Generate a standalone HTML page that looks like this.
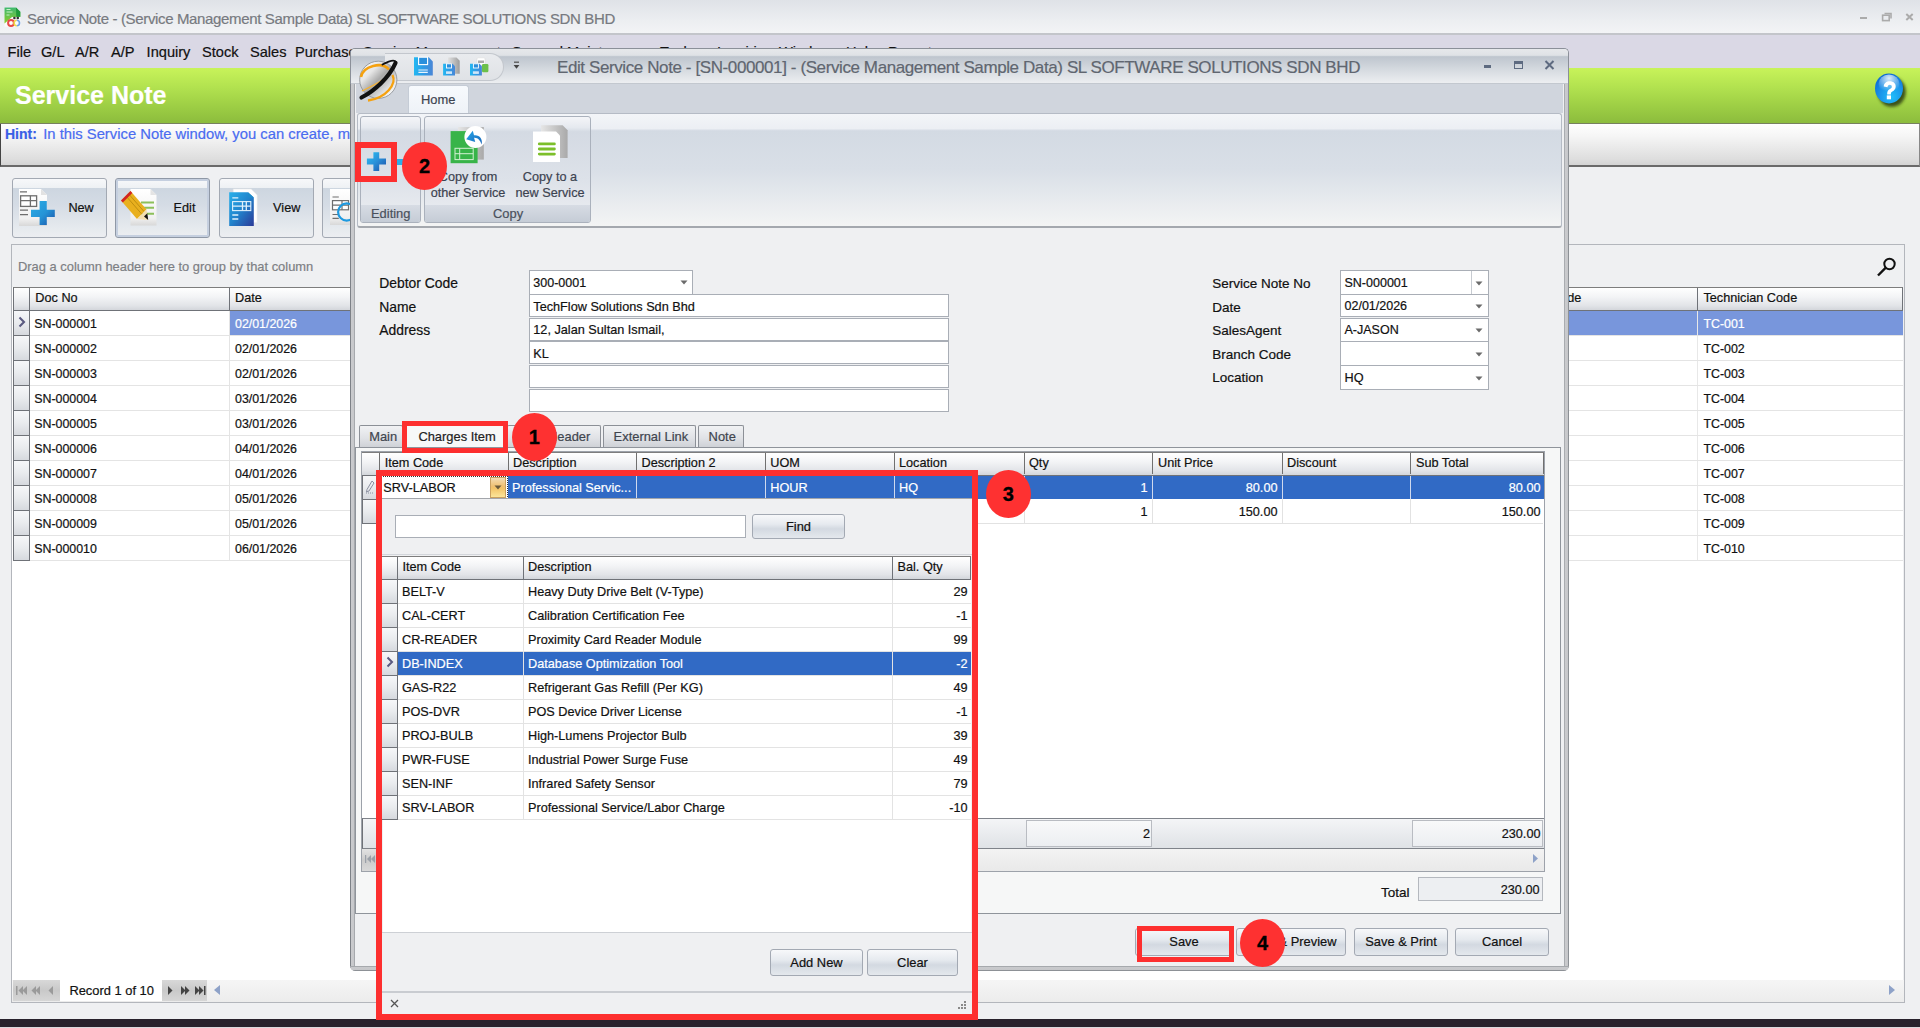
<!DOCTYPE html>
<html><head><meta charset="utf-8">
<style>
*{box-sizing:border-box;margin:0;padding:0}
html,body{width:1920px;height:1028px;overflow:hidden}
body{position:relative;background:#eff0f2;font-family:"Liberation Sans",sans-serif;font-size:12.7px;color:#111}
.a{position:absolute}
svg{display:block}
.t{position:absolute;white-space:pre;line-height:1;-webkit-text-stroke:0.2px currentColor}
.btn{position:absolute;border:1px solid #a3a9b3;border-radius:3px;background:linear-gradient(#f7f8fa,#e4e8ee 20%,#d5dbe3 55%,#e8ebef)}
.hd{position:absolute;background:linear-gradient(#ffffff,#f3f4f6 40%,#e2e4e8 80%,#d3d6db);border-top:1px solid #7d7d7d;border-bottom:1px solid #6f7278}
.ind{position:absolute;background:linear-gradient(#f6f7f9,#e9ebee 50%,#d6d9de);border:1px solid #6f7278;border-top:none}
.red{position:absolute;border:5px solid #fd2f2f}
.circ{position:absolute;width:46px;height:46px;border-radius:50%;background:#fe3131}
</style></head><body>
<div class="a" style="left:0px;top:0px;width:1920px;height:34px;background:linear-gradient(#dfe2e7,#eceef1 60%,#f3f4f6)"></div>
<div class="a" style="left:0px;top:33px;width:1920px;height:2px;background:#c3c5ca"></div>
<div class="a" style="left:4px;top:7px;width:18px;height:21px"><svg width="18" height="21" viewBox="0 0 18 21">
<defs><linearGradient id="ag" x1="0" y1="0" x2="0" y2="1"><stop offset="0" stop-color="#3fb870"/><stop offset="1" stop-color="#8ccc2a"/></linearGradient></defs>
<path d="M0.5 0.5h11.5l4.3 4.3v15H0.5z" fill="#fafafa"/>
<path d="M0.5 0.5h11.5l4.3 4.3v5.2H8L0.5 16.5z" fill="url(#ag)"/>
<path d="M12 0.5l4.3 4.3v5h-4z" fill="#1f9a3a"/>
<path d="M2.5 2.5h4M2.5 5h6M2.5 8h3" stroke="#c7efc7" stroke-width="1"/>
<circle cx="10.4" cy="11" r="1.3" fill="#333"/><circle cx="13.8" cy="11" r="1.3" fill="#333"/>
<circle cx="7" cy="16" r="2.9" fill="#fff" stroke="#e84848" stroke-width="2"/>
<path d="M12.8 13.3a2.7 2.7 0 0 0 0 5.4" fill="none" stroke="#f0d84a" stroke-width="1.6"/>
<path d="M12.8 13.3a2.7 2.7 0 0 1 0 5.4" fill="none" stroke="#6ea2e8" stroke-width="1.6"/>
</svg></div>
<div class="t" style="left:27px;top:11px;font-size:15px;color:#777a80;letter-spacing:-0.35px;">Service Note - (Service Management Sample Data) SL SOFTWARE SOLUTIONS SDN BHD</div>
<div class="a" style="left:1860px;top:17px;width:7px;height:2px;background:#ababab"></div>
<div class="a" style="left:1880px;top:12px"><svg width="14" height="10"><path d="M4.5 1.5h6.5v5" fill="none" stroke="#ababab" stroke-width="1.6"/><rect x="2.6" y="3.2" width="6.6" height="5.4" fill="none" stroke="#ababab" stroke-width="1.6"/></svg></div>
<div class="a" style="left:1905px;top:13px"><svg width="9" height="8"><path d="M1.3 1l6.4 6M7.7 1l-6.4 6" stroke="#ababab" stroke-width="2"/></svg></div>
<div class="a" style="left:0px;top:35px;width:1920px;height:33px;background:#dad8e5"></div>
<div class="t" style="left:7.6px;top:45px;font-size:14.6px;color:#111;">File</div>
<div class="t" style="left:41px;top:45px;font-size:14.6px;color:#111;">G/L</div>
<div class="t" style="left:75px;top:45px;font-size:14.6px;color:#111;">A/R</div>
<div class="t" style="left:111px;top:45px;font-size:14.6px;color:#111;">A/P</div>
<div class="t" style="left:146.6px;top:45px;font-size:14.6px;color:#111;">Inquiry</div>
<div class="t" style="left:202px;top:45px;font-size:14.6px;color:#111;">Stock</div>
<div class="t" style="left:250px;top:45px;font-size:14.6px;color:#111;">Sales</div>
<div class="t" style="left:295px;top:45px;font-size:14.6px;color:#111;">Purchase</div>
<div class="a" style="left:350px;top:35px;width:620px;height:14px;overflow:hidden"><div class="t" style="left:13px;top:10.1px;font-size:14.6px;color:#111">Service Management</div><div class="t" style="left:161px;top:10.1px;font-size:14.6px;color:#111">General Maintenance</div><div class="t" style="left:310px;top:10.1px;font-size:14.6px;color:#111">Tools</div><div class="t" style="left:367px;top:10.1px;font-size:14.6px;color:#111">Inquiries</div><div class="t" style="left:429px;top:10.1px;font-size:14.6px;color:#111">Window</div><div class="t" style="left:496px;top:10.1px;font-size:14.6px;color:#111">Help</div><div class="t" style="left:538px;top:10.1px;font-size:14.6px;color:#111">Reports</div></div>
<div class="a" style="left:0px;top:68px;width:1920px;height:55px;background:linear-gradient(#c8f35a,#b2e24f 35%,#9acb43 75%,#8cbc3d)"></div>
<div class="t" style="left:15px;top:83px;font-size:25px;color:#fff;font-weight:bold;">Service Note</div>
<div class="a" style="left:1870px;top:68px;width:40px;height:44px"><svg width="40" height="44" viewBox="0 0 40 44">
<defs><radialGradient id="hg" cx=".6" cy=".78" r=".85"><stop offset="0" stop-color="#22bdfa"/><stop offset=".55" stop-color="#1890e8"/><stop offset="1" stop-color="#0b62d0"/></radialGradient>
<radialGradient id="hh" cx=".5" cy=".2" r=".7"><stop offset="0" stop-color="#fff" stop-opacity=".85"/><stop offset="1" stop-color="#fff" stop-opacity="0"/></radialGradient>
<filter id="hb" x="-30%" y="-30%" width="160%" height="160%"><feGaussianBlur stdDeviation="1.6"/></filter></defs>
<ellipse cx="21.8" cy="23.8" rx="14" ry="15" fill="#24300c" opacity=".8" filter="url(#hb)"/>
<ellipse cx="19" cy="20.4" rx="14" ry="15" fill="url(#hg)"/>
<ellipse cx="19" cy="16" rx="10.5" ry="9.5" fill="url(#hh)"/>
<path d="M13.8 18.6C13.8 15.2 16.3 13.3 19.8 13.3 23.4 13.3 25.7 15.5 25.7 18.4 25.7 21 24.1 22.4 22.4 23.4 21.2 24.1 20.9 24.7 20.9 26V26.6H17.2V25.4C17.2 23.2 18.1 22 19.9 21 21.2 20.2 21.8 19.7 21.8 18.7 21.8 17.5 21 16.8 19.8 16.8 18.4 16.8 17.6 17.7 17.6 19.2z" fill="#fff"/>
<rect x="16.8" y="27.4" width="4.2" height="3.9" fill="#fff"/>
</svg></div>
<div class="a" style="left:0px;top:123px;width:1920px;height:44px;background:linear-gradient(#ffffff,#f6f6f6 30%,#dedede 85%,#d4d4d4);border-left:1px solid #444;border-right:1px solid #888;border-bottom:2px solid #6a6a6a"></div>
<div class="a" style="left:0px;top:122.5px;width:1920px;height:1px;background:#77805f"></div>
<div class="t" style="left:5px;top:127px;font-size:14px;color:#3a5fe6;font-weight:bold;">Hint:</div>
<div class="t" style="left:43.2px;top:127px;font-size:14.8px;color:#4a6cf0;">In this Service Note window, you can create, modify and delete</div>
<div class="btn" style="left:11.5px;top:177.5px;width:95.0px;height:60px;border-radius:3px;background:linear-gradient(#f7f8fa,#eef1f4 15%,#cdd6e0 16%,#d5dce5 45%,#e6eaee 85%,#eceef1)"></div>
<div class="a" style="left:12px;top:180px;width:60px;height:55px"><svg width="60" height="55" viewBox="0 0 60 55">
<defs><linearGradient id="dg" x1="0" y1="0" x2="0" y2="1"><stop offset="0" stop-color="#ffffff"/><stop offset=".8" stop-color="#f0f0f0"/><stop offset="1" stop-color="#d8d8d8"/></linearGradient>
<linearGradient id="pg" x1="0" y1="0" x2="1" y2="1"><stop offset="0" stop-color="#2aaee6"/><stop offset=".55" stop-color="#2593d6"/><stop offset="1" stop-color="#1a4fa6"/></linearGradient></defs>
<path d="M7 9h22l6 6v31H7z" fill="url(#dg)"/><path d="M29 9l6 6h-6z" fill="#e2e2e2"/>
<rect x="8.6" y="15.8" width="16" height="10.6" fill="#fff" stroke="#6e6e6e" stroke-width="1.3"/>
<path d="M8.6 20.6h16M18.4 15.8v10.6M8 11.8h7M8 30.2h8M8 34.6h8" stroke="#6e6e6e" stroke-width="1.3"/>
<path d="M27.6 21h7.2v8.7h8v7.2h-8V45h-7.2v-8.1H19v-7.2h8.6z" fill="url(#pg)"/>
</svg></div>
<div class="t" style="left:68.4px;top:202px;font-size:12.7px;color:#111;">New</div>
<div class="btn" style="left:114.5px;top:177.5px;width:95.0px;height:60px;border-radius:3px;box-shadow:inset 0 0 0 2px #c5cfdf;border-color:#8f98a6;background:linear-gradient(#f7f8fa,#eef1f4 15%,#cdd6e0 16%,#d5dce5 45%,#e6eaee 85%,#eceef1)"></div>
<div class="a" style="left:115px;top:180px;width:60px;height:55px"><svg width="60" height="55" viewBox="0 0 60 55">
<path d="M15.5 9h20l6 6v30.5h-26z" fill="url(#dg)"/><path d="M35.5 9l6 6h-6z" fill="#e4e4e4"/>
<path d="M26 22.5h13M26 27.8h13M21 33.7h18" stroke="#8cc05a" stroke-width="2"/>
<path d="M6 20.5l9.5-9.5 16 18.5-9.5 9.5z" fill="#e9b01e"/>
<path d="M11 16l15.5 17.8M13.4 13.6l15.5 17.8" stroke="#b98a10" stroke-width="0.9"/>
<path d="M6 20.5l9.5-9.5 1.8 2-9.5 9.5z" fill="#d22424"/>
<path d="M22 39l9.5-9.5 1.5 10.5z" fill="#f3deb0"/><path d="M29 36.5l3.3-3.2.9 6.7z" fill="#111"/>
</svg></div>
<div class="t" style="left:173.6px;top:202px;font-size:12.7px;color:#111;">Edit</div>
<div class="btn" style="left:218.5px;top:177.5px;width:95.0px;height:60px;border-radius:3px;background:linear-gradient(#f7f8fa,#eef1f4 15%,#cdd6e0 16%,#d5dce5 45%,#e6eaee 85%,#eceef1)"></div>
<div class="a" style="left:219px;top:180px;width:60px;height:55px"><svg width="60" height="55" viewBox="0 0 60 55">
<defs><linearGradient id="vg" x1="0" y1="0" x2="1" y2="1"><stop offset="0" stop-color="#28b0ea"/><stop offset=".5" stop-color="#2183cc"/><stop offset="1" stop-color="#2b3a98"/></linearGradient></defs>
<path d="M14.2 9h18l6 6v27.8h-24z" fill="#fff" stroke="#e6e6e6" stroke-width=".6"/>
<path d="M10.2 12.2h18.8l5.8 5.3v28.4H10.2z" fill="url(#vg)"/><path d="M29 12.2l5.8 5.3H29z" fill="#1e8ccc"/>
<rect x="13.6" y="21.6" width="18.2" height="9" fill="none" stroke="#dff1fc" stroke-width="1.1"/>
<path d="M13.6 26.1h18.2M23.5 21.6v9M27.3 21.6v9M13.3 17.8h6M13.3 35h6M13.3 39h6" stroke="#dff1fc" stroke-width="1.3"/>
</svg></div>
<div class="t" style="left:273.1px;top:202px;font-size:12.7px;color:#111;">View</div>
<div class="btn" style="left:321.5px;top:177.5px;width:95px;height:60px;background:linear-gradient(#f7f8fa,#eef1f4 15%,#cdd6e0 16%,#d5dce5 45%,#e6eaee 85%,#eceef1)"></div>
<div class="a" style="left:322px;top:180px;width:60px;height:55px"><svg width="60" height="55" viewBox="0 0 60 55"><path d="M8 9h22l6 6v30H8z" fill="url(#dg)"/><rect x="10.5" y="20.6" width="16" height="9.2" fill="#fff" stroke="#6e6e6e" stroke-width="1.2"/><path d="M10.5 25.2h16M20 20.6v9.2M10.5 17h6.3M10.5 34.5h6.3M10.5 38.4h6.3" stroke="#6e6e6e" stroke-width="1.2"/><circle cx="24.7" cy="32" r="8.6" fill="none" stroke="#1e9ae0" stroke-width="2.2"/></svg></div>
<div class="a" style="left:11px;top:244px;width:1894px;height:759px;border:1px solid #b3b6bc;background:#eff0f2"></div>
<div class="t" style="left:18px;top:261px;font-size:12.9px;color:#7d7f84;">Drag a column header here to group by that column</div>
<div class="a" style="left:1876px;top:256px;width:22px;height:22px"><svg width="22" height="22"><circle cx="13.5" cy="8" r="5.2" fill="none" stroke="#111" stroke-width="2"/><path d="M9.8 11.7L2 19.5" stroke="#111" stroke-width="2.4"/></svg></div>
<div class="a" style="left:12px;top:287px;width:1891px;height:693px;background:#fff"></div>
<div class="hd" style="left:13px;top:287px;width:1890px;height:24px;border-left:1px solid #6f7278;border-right:1px solid #6f7278"></div>
<div class="a" style="left:29px;top:288px;width:1px;height:22px;background:#6f7278"></div>
<div class="a" style="left:229px;top:288px;width:1px;height:22px;background:#6f7278"></div>
<div class="a" style="left:1697px;top:288px;width:1px;height:22px;background:#6f7278"></div>
<div class="t" style="left:35.3px;top:292px;font-size:12.7px;color:#111;">Doc No</div>
<div class="t" style="left:235px;top:292px;font-size:12.7px;color:#111;">Date</div>
<div class="t" style="left:1551px;top:292px;font-size:12.7px;color:#111;">Code</div>
<div class="t" style="left:1703.4px;top:292px;font-size:12.7px;color:#111;">Technician Code</div>
<div class="a" style="left:230px;top:311px;width:1673px;height:24px;background:#7896dc"></div>
<div class="a" style="left:30px;top:335px;width:1873px;height:1px;background:#e4e4e4"></div>
<div class="a" style="left:229px;top:311px;width:1px;height:24px;background:#e4e4e4"></div>
<div class="a" style="left:1697px;top:311px;width:1px;height:24px;background:#e8e8e8"></div>
<div class="ind" style="left:13px;top:311px;width:17px;height:25px"></div>
<div class="t" style="left:34.2px;top:318px;font-size:12.4px;color:#111;">SN-000001</div>
<div class="t" style="left:235px;top:318px;font-size:12.4px;color:#fff;">02/01/2026</div>
<div class="t" style="left:1703.4px;top:318px;font-size:12.4px;color:#fff;">TC-001</div>
<div class="a" style="left:30px;top:360px;width:1873px;height:1px;background:#e4e4e4"></div>
<div class="a" style="left:229px;top:336px;width:1px;height:24px;background:#e4e4e4"></div>
<div class="a" style="left:1697px;top:336px;width:1px;height:24px;background:#e8e8e8"></div>
<div class="ind" style="left:13px;top:336px;width:17px;height:25px"></div>
<div class="t" style="left:34.2px;top:343px;font-size:12.4px;color:#111;">SN-000002</div>
<div class="t" style="left:235px;top:343px;font-size:12.4px;color:#111;">02/01/2026</div>
<div class="t" style="left:1703.4px;top:343px;font-size:12.4px;color:#111;">TC-002</div>
<div class="a" style="left:30px;top:385px;width:1873px;height:1px;background:#e4e4e4"></div>
<div class="a" style="left:229px;top:361px;width:1px;height:24px;background:#e4e4e4"></div>
<div class="a" style="left:1697px;top:361px;width:1px;height:24px;background:#e8e8e8"></div>
<div class="ind" style="left:13px;top:361px;width:17px;height:25px"></div>
<div class="t" style="left:34.2px;top:368px;font-size:12.4px;color:#111;">SN-000003</div>
<div class="t" style="left:235px;top:368px;font-size:12.4px;color:#111;">02/01/2026</div>
<div class="t" style="left:1703.4px;top:368px;font-size:12.4px;color:#111;">TC-003</div>
<div class="a" style="left:30px;top:410px;width:1873px;height:1px;background:#e4e4e4"></div>
<div class="a" style="left:229px;top:386px;width:1px;height:24px;background:#e4e4e4"></div>
<div class="a" style="left:1697px;top:386px;width:1px;height:24px;background:#e8e8e8"></div>
<div class="ind" style="left:13px;top:386px;width:17px;height:25px"></div>
<div class="t" style="left:34.2px;top:393px;font-size:12.4px;color:#111;">SN-000004</div>
<div class="t" style="left:235px;top:393px;font-size:12.4px;color:#111;">03/01/2026</div>
<div class="t" style="left:1703.4px;top:393px;font-size:12.4px;color:#111;">TC-004</div>
<div class="a" style="left:30px;top:435px;width:1873px;height:1px;background:#e4e4e4"></div>
<div class="a" style="left:229px;top:411px;width:1px;height:24px;background:#e4e4e4"></div>
<div class="a" style="left:1697px;top:411px;width:1px;height:24px;background:#e8e8e8"></div>
<div class="ind" style="left:13px;top:411px;width:17px;height:25px"></div>
<div class="t" style="left:34.2px;top:418px;font-size:12.4px;color:#111;">SN-000005</div>
<div class="t" style="left:235px;top:418px;font-size:12.4px;color:#111;">03/01/2026</div>
<div class="t" style="left:1703.4px;top:418px;font-size:12.4px;color:#111;">TC-005</div>
<div class="a" style="left:30px;top:460px;width:1873px;height:1px;background:#e4e4e4"></div>
<div class="a" style="left:229px;top:436px;width:1px;height:24px;background:#e4e4e4"></div>
<div class="a" style="left:1697px;top:436px;width:1px;height:24px;background:#e8e8e8"></div>
<div class="ind" style="left:13px;top:436px;width:17px;height:25px"></div>
<div class="t" style="left:34.2px;top:443px;font-size:12.4px;color:#111;">SN-000006</div>
<div class="t" style="left:235px;top:443px;font-size:12.4px;color:#111;">04/01/2026</div>
<div class="t" style="left:1703.4px;top:443px;font-size:12.4px;color:#111;">TC-006</div>
<div class="a" style="left:30px;top:485px;width:1873px;height:1px;background:#e4e4e4"></div>
<div class="a" style="left:229px;top:461px;width:1px;height:24px;background:#e4e4e4"></div>
<div class="a" style="left:1697px;top:461px;width:1px;height:24px;background:#e8e8e8"></div>
<div class="ind" style="left:13px;top:461px;width:17px;height:25px"></div>
<div class="t" style="left:34.2px;top:468px;font-size:12.4px;color:#111;">SN-000007</div>
<div class="t" style="left:235px;top:468px;font-size:12.4px;color:#111;">04/01/2026</div>
<div class="t" style="left:1703.4px;top:468px;font-size:12.4px;color:#111;">TC-007</div>
<div class="a" style="left:30px;top:510px;width:1873px;height:1px;background:#e4e4e4"></div>
<div class="a" style="left:229px;top:486px;width:1px;height:24px;background:#e4e4e4"></div>
<div class="a" style="left:1697px;top:486px;width:1px;height:24px;background:#e8e8e8"></div>
<div class="ind" style="left:13px;top:486px;width:17px;height:25px"></div>
<div class="t" style="left:34.2px;top:493px;font-size:12.4px;color:#111;">SN-000008</div>
<div class="t" style="left:235px;top:493px;font-size:12.4px;color:#111;">05/01/2026</div>
<div class="t" style="left:1703.4px;top:493px;font-size:12.4px;color:#111;">TC-008</div>
<div class="a" style="left:30px;top:535px;width:1873px;height:1px;background:#e4e4e4"></div>
<div class="a" style="left:229px;top:511px;width:1px;height:24px;background:#e4e4e4"></div>
<div class="a" style="left:1697px;top:511px;width:1px;height:24px;background:#e8e8e8"></div>
<div class="ind" style="left:13px;top:511px;width:17px;height:25px"></div>
<div class="t" style="left:34.2px;top:518px;font-size:12.4px;color:#111;">SN-000009</div>
<div class="t" style="left:235px;top:518px;font-size:12.4px;color:#111;">05/01/2026</div>
<div class="t" style="left:1703.4px;top:518px;font-size:12.4px;color:#111;">TC-009</div>
<div class="a" style="left:30px;top:560px;width:1873px;height:1px;background:#e4e4e4"></div>
<div class="a" style="left:229px;top:536px;width:1px;height:24px;background:#e4e4e4"></div>
<div class="a" style="left:1697px;top:536px;width:1px;height:24px;background:#e8e8e8"></div>
<div class="ind" style="left:13px;top:536px;width:17px;height:25px"></div>
<div class="t" style="left:34.2px;top:543px;font-size:12.4px;color:#111;">SN-000010</div>
<div class="t" style="left:235px;top:543px;font-size:12.4px;color:#111;">06/01/2026</div>
<div class="t" style="left:1703.4px;top:543px;font-size:12.4px;color:#111;">TC-010</div>
<div class="a" style="left:18px;top:316px"><svg width="9" height="12"><path d="M1.5 1.5L6 6L1.5 10.5" fill="none" stroke="#5a5a80" stroke-width="2.1"/></svg></div>
<div class="a" style="left:12px;top:980px;width:1892px;height:22px;background:linear-gradient(#f5f5f5,#ececec)"></div>
<div class="a" style="left:13px;top:980px;width:47px;height:21px;background:linear-gradient(#d8d8d8,#c9c9c9 50%,#d6d6d6)"></div>
<div class="a" style="left:60px;top:980px;width:102px;height:21px;background:#fff"></div>
<div class="a" style="left:162px;top:980px;width:45px;height:21px;background:linear-gradient(#d8d8d8,#c9c9c9 50%,#d6d6d6)"></div>
<div class="a" style="left:15px;top:984px"><svg width="45" height="14"><g fill="#9a9a9a"><rect x="1" y="2" width="1.5" height="9"/><path d="M8 2v9L3.5 6.5z"/><path d="M12 2v9L7.5 6.5z"/><path d="M21 2v9L16.5 6.5z"/><path d="M25 2v9L20.5 6.5z"/><path d="M38 2v9L33.5 6.5z"/></g></svg></div>
<div class="t" style="left:69.4px;top:985px;font-size:12.9px;color:#111;">Record 1 of 10</div>
<div class="a" style="left:164px;top:984px"><svg width="45" height="14"><g fill="#444"><path d="M4 2v9l4.5-4.5z"/><path d="M17 2v9l4.5-4.5z"/><path d="M21 2v9l4.5-4.5z"/><path d="M31 2v9l4.5-4.5z"/><path d="M35 2v9l4.5-4.5z"/><rect x="40" y="2" width="1.5" height="9"/></g></svg></div>
<div class="a" style="left:213px;top:984px"><svg width="8" height="12"><path d="M7 1v10L1 6z" fill="#8ea2c8"/></svg></div>
<div class="a" style="left:1888px;top:984px"><svg width="8" height="12"><path d="M1 1v10l6-5z" fill="#8ea2c8"/></svg></div>
<div class="a" style="left:0px;top:1019px;width:1920px;height:8px;background:#28222c"></div>
<div class="a" style="left:0px;top:1027px;width:1920px;height:1px;background:#d9d9dc"></div>
<div class="a" style="left:350px;top:48px;width:1219px;height:923px;border:1px solid #8b9099;border-bottom:none;border-radius:5px 5px 6px 6px;background:#eff0f2"></div>
<div class="a" style="left:351px;top:49px;width:1217px;height:35px;border-radius:4px 4px 0 0;background:linear-gradient(#e6e8eb,#dfe2e6 18%,#bec5ce 22%,#d3d8de 55%,#eef0f2 100%)"></div>
<div class="a" style="left:351px;top:83px;width:1217px;height:1px;background:#c3c8cf"></div>
<div class="a" style="left:385px;top:53px;width:119px;height:28px;border-radius:0 14px 14px 0;background:linear-gradient(#e9ebee,#dfe2e6);border:1px solid #c3c7cd;border-left:none"></div>
<div class="a" style="left:405px;top:50px;width:120px;height:35px"><svg width="120" height="35" viewBox="0 0 120 35">
<defs><linearGradient id="fl" x1="0" y1="0" x2="1" y2="0"><stop offset="0" stop-color="#22b8f2"/><stop offset=".5" stop-color="#2f9be6"/><stop offset="1" stop-color="#4a86d6"/></linearGradient>
<linearGradient id="gd" x1="0" y1="0" x2="1" y2="0"><stop offset="0" stop-color="#e2e2e2"/><stop offset="1" stop-color="#9c9c9c"/></linearGradient></defs>
<path d="M9 7.2h14.8l4 4.4v14H9z" fill="url(#fl)"/>
<rect x="13.6" y="7.2" width="9" height="7.4" fill="#2a8fdc" stroke="#fff" stroke-width="1.1"/>
<path d="M13.4 20h9.4M13.4 22.4h9.4" stroke="#e8f4fd" stroke-width="1.1"/>
<path d="M43 7.5h8.5l3.2 3.2v13H43z" fill="url(#gd)"/>
<path d="M38.1 13.8h9.5l2.4 2.4v9.4H38.1z" fill="url(#fl)"/>
<rect x="41.5" y="13.8" width="5" height="4.2" fill="#2a8fdc" stroke="#fff" stroke-width=".9"/>
<rect x="41" y="21.3" width="6" height="2.6" fill="#cfe6f8"/>
<rect x="72" y="7.8" width="8" height="7.5" rx="1" fill="#fff" stroke="#ddd" stroke-width=".6"/><rect x="73" y="10.5" width="6" height="2.5" fill="#aaa"/>
<rect x="77" y="14" width="6.4" height="8.2" rx="1.2" fill="#6cc04a"/>
<path d="M65 13.8h9.5l2.4 2.4v9.4H65z" fill="url(#fl)"/>
<rect x="68.4" y="13.8" width="5" height="4.2" fill="#2a8fdc" stroke="#fff" stroke-width=".9"/>
<rect x="67.9" y="21.3" width="6" height="2.6" fill="#cfe6f8"/>
<path d="M109 12.2h5" stroke="#555" stroke-width="1.3"/><path d="M108.6 15h5.8l-2.9 3.8z" fill="#444"/>
</svg></div>
<div class="t" style="left:557px;top:59px;font-size:17px;color:#606670;letter-spacing:-0.4px;">Edit Service Note - [SN-000001] - (Service Management Sample Data) SL SOFTWARE SOLUTIONS SDN BHD</div>
<div class="a" style="left:1484px;top:64.5px;width:7px;height:3px;background:#5d6a80"></div>
<div class="a" style="left:1514px;top:61px;width:9px;height:8px;border:1px solid #5d6a80;border-top:3px solid #5d6a80"></div>
<div class="a" style="left:1544px;top:60px"><svg width="11" height="10"><path d="M1.5 1l8 8M9.5 1l-8 8" stroke="#5d6a80" stroke-width="2"/></svg></div>
<div class="a" style="left:350px;top:84px;width:5px;height:884px;background:linear-gradient(90deg,#7d8187 0,#7d8187 1px,#cacbce 1px,#c6c7ca 4px,#a6a9ad 4px)"></div>
<div class="a" style="left:1564px;top:84px;width:5px;height:884px;background:linear-gradient(90deg,#a9acb0 0,#a9acb0 1px,#cacbce 1px,#c6c7ca 4px,#8d9196 4px)"></div>
<div class="a" style="left:350px;top:966px;width:1219px;height:5px;border-radius:0 0 6px 6px;background:linear-gradient(#a6a9ad 0,#a6a9ad 1px,#c9cacd 1px,#c6c7ca 4px,#8d9196 4px)"></div>
<div class="a" style="left:356px;top:84px;width:1207px;height:29px;background:#d0d5dd"></div>
<div class="a" style="left:408px;top:85px;width:61px;height:29px;border:1px solid #c5ccd6;border-bottom:none;border-radius:3px 3px 0 0;background:linear-gradient(#f7fafd,#eef2f7)"></div>
<div class="t" style="left:421px;top:94px;font-size:12.9px;color:#3c4350;">Home</div>
<div class="a" style="left:352px;top:50px;width:60px;height:60px"><svg width="60" height="60" viewBox="0 0 60 60">
<defs><linearGradient id="lg" x1="0" y1="0" x2="1" y2="1"><stop offset="0" stop-color="#ffffff"/><stop offset=".3" stop-color="#e6e6e6"/><stop offset=".5" stop-color="#a9a9a9"/><stop offset=".72" stop-color="#dcdcdc"/><stop offset=".9" stop-color="#ffffff"/></linearGradient></defs>
<circle cx="26.3" cy="29.8" r="18.6" fill="url(#lg)" stroke="#8f9399" stroke-width=".9"/>
<path d="M9 27 C11 16, 30 11, 37 19.5" fill="none" stroke="#f5a10f" stroke-width="2.6"/>
<path d="M40.5 25 C45 34, 34 48, 16 50.5" fill="none" stroke="#f5a10f" stroke-width="2.3"/>
<path d="M10 41 C18 37, 27 33, 35 27" fill="none" stroke="#f7b233" stroke-width="1.3"/>
<path d="M9.5 47.5 C22 41, 37 28, 43.5 13" fill="none" stroke="#111" stroke-width="4.2" stroke-linecap="round"/>
<path d="M44 12 C42.5 9.5, 37 11, 30.5 14.5" fill="none" stroke="#111" stroke-width="1.8" stroke-linecap="round"/>
</svg></div>
<div class="a" style="left:357px;top:113px;width:1205px;height:115px;border:1px solid #b5bbc5;border-bottom:2px solid #a4a8ae;border-radius:3px;background:linear-gradient(#f3f5f8,#eceff4 13%,#d3dae3 15%,#d9dfe7 50%,#e9ecef 80%,#f3f4f4)"></div>
<div class="a" style="left:360px;top:116px;width:61px;height:107px;border:1px solid #aab1bc;border-radius:3px;background:linear-gradient(#f4f5f8,#e5e9ef 10%,#d4dae3 14%,#dde2e9 60%,#eceef2)"></div>
<div class="a" style="left:361px;top:205px;width:59px;height:17px;border-radius:0 0 2px 2px;background:linear-gradient(#d7dce4,#c5ccd6)"></div>
<div class="t" style="left:371px;top:208px;font-size:12.9px;color:#4a505c;">Editing</div>
<div class="a" style="left:424px;top:116px;width:167px;height:107px;border:1px solid #aab1bc;border-radius:3px;background:linear-gradient(#f4f5f8,#e5e9ef 10%,#d4dae3 14%,#dde2e9 60%,#eceef2)"></div>
<div class="a" style="left:425px;top:205px;width:165px;height:17px;border-radius:0 0 2px 2px;background:linear-gradient(#d7dce4,#c5ccd6)"></div>
<div class="t" style="left:493px;top:208px;font-size:12.9px;color:#4a505c;">Copy</div>
<div class="a" style="left:366px;top:152px"><svg width="21" height="20"><defs><linearGradient id="plg" x1="0" y1="0" x2="1" y2="1"><stop offset="0" stop-color="#2cc0f4"/><stop offset=".5" stop-color="#2a8fd8"/><stop offset="1" stop-color="#1c4fa8"/></linearGradient></defs><path d="M7.4 0.3h5.8v6.2H20v6.1h-6.8V19H7.4v-6.4H0.9V6.5h6.5z" fill="url(#plg)"/></svg></div>
<div class="a" style="left:396px;top:158.5px;width:7px;height:6px;background:#2aaeea"></div>
<div class="a" style="left:440px;top:118px;width:140px;height:52px"><svg width="140" height="52" viewBox="0 0 140 52">
<defs><linearGradient id="cg" x1="0" y1="0" x2="1" y2="0"><stop offset="0" stop-color="#e6e6e6"/><stop offset="1" stop-color="#a9a9a9"/></linearGradient>
<linearGradient id="ab" x1="0" y1="0" x2="1" y2="1"><stop offset="0" stop-color="#27a6ea"/><stop offset="1" stop-color="#1865b8"/></linearGradient>
<filter id="cs" x="-20%" y="-20%" width="140%" height="140%"><feGaussianBlur stdDeviation=".5"/></filter></defs>
<rect x="17.9" y="9.1" width="25.9" height="32.5" fill="url(#cg)"/>
<rect x="10.6" y="13.1" width="27" height="32.1" fill="#38b449"/>
<rect x="15" y="30.3" width="18.2" height="11.3" fill="none" stroke="#d2f0d2" stroke-width="1"/>
<path d="M15 35.7h18.2M19.7 30.3v11.3" stroke="#d2f0d2" stroke-width="1"/>
<circle cx="35.4" cy="19" r="11" fill="#fff" filter="url(#cs)"/>
<path d="M41.6 26.6C43 21 39.5 16.5 34 17.2l-1.2-4.5-6.6 8.6 9 2.6-1.1-4.2c3.6-.3 6.3 2.5 7.5 6.9z" fill="url(#ab)"/>
<path d="M101 7.3h21.6l5 5v27.8H101z" fill="url(#cg)"/>
<path d="M93 13.5h23l4 4v26.6H93z" fill="#fff"/>
<path d="M99.3 25.9h15.1M99.3 31h15.1M99.3 36.1h15.1" stroke="#7cbf2a" stroke-width="2.8" stroke-linecap="round"/>
</svg></div>
<div class="t" style="left:468px;top:171px;font-size:12.7px;color:#3c4350;transform:translateX(-50%);">Copy from</div>
<div class="t" style="left:468px;top:187px;font-size:12.7px;color:#3c4350;transform:translateX(-50%);">other Service</div>
<div class="t" style="left:550px;top:171px;font-size:12.7px;color:#3c4350;transform:translateX(-50%);">Copy to a</div>
<div class="t" style="left:550px;top:187px;font-size:12.7px;color:#3c4350;transform:translateX(-50%);">new Service</div>
<div class="t" style="left:379.2px;top:277px;font-size:13.9px;color:#111;">Debtor Code</div>
<div class="t" style="left:379.2px;top:301px;font-size:13.9px;color:#111;">Name</div>
<div class="t" style="left:379.2px;top:324px;font-size:13.9px;color:#111;">Address</div>
<div class="a" style="left:529px;top:270px;width:164px;height:25px;border:1px solid #a9aeb6;background:#fff"></div>
<div class="a" style="left:529px;top:294px;width:420px;height:23px;border:1px solid #a9aeb6;background:#fff"></div>
<div class="a" style="left:529px;top:318px;width:420px;height:23px;border:1px solid #a9aeb6;background:#fff"></div>
<div class="a" style="left:529px;top:341px;width:420px;height:23px;border:1px solid #a9aeb6;background:#fff"></div>
<div class="a" style="left:529px;top:365px;width:420px;height:23px;border:1px solid #a9aeb6;background:#fff"></div>
<div class="a" style="left:529px;top:389px;width:420px;height:23px;border:1px solid #a9aeb6;background:#fff"></div>
<div class="t" style="left:533.3px;top:277px;font-size:12.5px;color:#111;">300-0001</div>
<div class="t" style="left:533.3px;top:301px;font-size:12.7px;color:#111;">TechFlow Solutions Sdn Bhd</div>
<div class="t" style="left:533.3px;top:324px;font-size:12.7px;color:#111;">12, Jalan Sultan Ismail,</div>
<div class="t" style="left:533.3px;top:348px;font-size:12.7px;color:#111;">KL</div>
<div class="a" style="left:680px;top:280px"><svg width="9" height="5"><path d="M0.5 0.5h7l-3.5 4z" fill="#6b6b6b"/></svg></div>
<div class="t" style="left:1212.2px;top:277px;font-size:13.5px;color:#111;">Service Note No</div>
<div class="t" style="left:1212.2px;top:301px;font-size:13.5px;color:#111;">Date</div>
<div class="t" style="left:1212.2px;top:324px;font-size:13.5px;color:#111;">SalesAgent</div>
<div class="t" style="left:1212.2px;top:348px;font-size:13.5px;color:#111;">Branch Code</div>
<div class="t" style="left:1212.2px;top:371px;font-size:13.5px;color:#111;">Location</div>
<div class="a" style="left:1340px;top:270px;width:149px;height:25px;border:1px solid #a9aeb6;background:#fff"></div>
<div class="a" style="left:1471px;top:271px;width:1px;height:23px;background:#c7cbd1"></div>
<div class="a" style="left:1340px;top:294px;width:149px;height:23px;border:1px solid #a9aeb6;background:#fff"></div>
<div class="a" style="left:1340px;top:318px;width:149px;height:24px;border:1px solid #a9aeb6;background:#fff"></div>
<div class="a" style="left:1340px;top:341px;width:149px;height:25px;border:1px solid #a9aeb6;background:#fff"></div>
<div class="a" style="left:1340px;top:365px;width:149px;height:25px;border:1px solid #a9aeb6;background:#fff"></div>
<div class="a" style="left:1475px;top:281px"><svg width="9" height="5"><path d="M0.5 0.5h7l-3.5 4z" fill="#6b6b6b"/></svg></div>
<div class="a" style="left:1475px;top:304px"><svg width="9" height="5"><path d="M0.5 0.5h7l-3.5 4z" fill="#6b6b6b"/></svg></div>
<div class="a" style="left:1475px;top:328px"><svg width="9" height="5"><path d="M0.5 0.5h7l-3.5 4z" fill="#6b6b6b"/></svg></div>
<div class="a" style="left:1475px;top:352px"><svg width="9" height="5"><path d="M0.5 0.5h7l-3.5 4z" fill="#6b6b6b"/></svg></div>
<div class="a" style="left:1475px;top:376px"><svg width="9" height="5"><path d="M0.5 0.5h7l-3.5 4z" fill="#6b6b6b"/></svg></div>
<div class="t" style="left:1344.5px;top:277px;font-size:12.5px;color:#111;">SN-000001</div>
<div class="t" style="left:1344.5px;top:300px;font-size:12.5px;color:#111;">02/01/2026</div>
<div class="t" style="left:1344.5px;top:324px;font-size:12.5px;color:#111;">A-JASON</div>
<div class="t" style="left:1344.5px;top:372px;font-size:12.7px;color:#111;">HQ</div>
<div class="a" style="left:359px;top:425px;width:44px;height:23px;border:1px solid #8c9097;border-bottom:none;border-radius:2px 2px 0 0;background:linear-gradient(#f1f2f4,#e0e2e6 55%,#cdd0d5)"></div>
<div class="t" style="left:369.2px;top:431px;font-size:12.9px;color:#40454e;">Main</div>
<div class="a" style="left:507px;top:425px;width:94px;height:23px;border:1px solid #8c9097;border-bottom:none;border-radius:2px 2px 0 0;background:linear-gradient(#f1f2f4,#e0e2e6 55%,#cdd0d5)"></div>
<div class="t" style="left:548px;top:431px;font-size:12.9px;color:#40454e;">Header</div>
<div class="a" style="left:602.5px;top:425px;width:93.5px;height:23px;border:1px solid #8c9097;border-bottom:none;border-radius:2px 2px 0 0;background:linear-gradient(#f1f2f4,#e0e2e6 55%,#cdd0d5)"></div>
<div class="t" style="left:613.6px;top:431px;font-size:12.9px;color:#40454e;">External Link</div>
<div class="a" style="left:697.5px;top:425px;width:46.5px;height:23px;border:1px solid #8c9097;border-bottom:none;border-radius:2px 2px 0 0;background:linear-gradient(#f1f2f4,#e0e2e6 55%,#cdd0d5)"></div>
<div class="t" style="left:708.6px;top:431px;font-size:12.9px;color:#40454e;">Note</div>
<div class="a" style="left:402px;top:422px;width:105px;height:26px;border:1px solid #8c9097;border-bottom:none;background:#f7f8f8"></div>
<div class="a" style="left:355px;top:447px;width:1206px;height:467px;border:1px solid #8f949b;background:#f6f7f7"></div>
<div class="t" style="left:418.4px;top:431px;font-size:12.9px;color:#222;">Charges Item</div>
<div class="a" style="left:361px;top:451px;width:1184px;height:421px;border:1px solid #9da2aa;background:#fff"></div>
<div class="hd" style="left:362px;top:452px;width:1182px;height:24px"></div>
<div class="a" style="left:378.5px;top:453px;width:1px;height:21px;background:#707070"></div>
<div class="a" style="left:507.5px;top:453px;width:1px;height:21px;background:#707070"></div>
<div class="a" style="left:636.4px;top:453px;width:1px;height:21px;background:#707070"></div>
<div class="a" style="left:765.3px;top:453px;width:1px;height:21px;background:#707070"></div>
<div class="a" style="left:894px;top:453px;width:1px;height:21px;background:#707070"></div>
<div class="a" style="left:1023.5px;top:453px;width:1px;height:21px;background:#707070"></div>
<div class="a" style="left:1152.2px;top:453px;width:1px;height:21px;background:#707070"></div>
<div class="a" style="left:1281.5px;top:453px;width:1px;height:21px;background:#707070"></div>
<div class="a" style="left:1410.4px;top:453px;width:1px;height:21px;background:#707070"></div>
<div class="a" style="left:1543px;top:453px;width:1px;height:21px;background:#707070"></div>
<div class="t" style="left:384.7px;top:457px;font-size:12.7px;color:#111;">Item Code</div>
<div class="t" style="left:513px;top:457px;font-size:12.7px;color:#111;">Description</div>
<div class="t" style="left:641.5px;top:457px;font-size:12.7px;color:#111;">Description 2</div>
<div class="t" style="left:770.3px;top:457px;font-size:12.7px;color:#111;">UOM</div>
<div class="t" style="left:899px;top:457px;font-size:12.7px;color:#111;">Location</div>
<div class="t" style="left:1029px;top:457px;font-size:12.7px;color:#111;">Qty</div>
<div class="t" style="left:1158px;top:457px;font-size:12.7px;color:#111;">Unit Price</div>
<div class="t" style="left:1287px;top:457px;font-size:12.7px;color:#111;">Discount</div>
<div class="t" style="left:1416px;top:457px;font-size:12.7px;color:#111;">Sub Total</div>
<div class="a" style="left:507.5px;top:476px;width:1036px;height:23px;background:#316ac5"></div>
<div class="a" style="left:636.4px;top:476px;width:1px;height:23px;background:#cfd9ee"></div>
<div class="a" style="left:765.3px;top:476px;width:1px;height:23px;background:#cfd9ee"></div>
<div class="a" style="left:894px;top:476px;width:1px;height:23px;background:#cfd9ee"></div>
<div class="a" style="left:1023.5px;top:476px;width:1px;height:23px;background:#cfd9ee"></div>
<div class="a" style="left:1152.2px;top:476px;width:1px;height:23px;background:#cfd9ee"></div>
<div class="a" style="left:1281.5px;top:476px;width:1px;height:23px;background:#cfd9ee"></div>
<div class="a" style="left:1410.4px;top:476px;width:1px;height:23px;background:#cfd9ee"></div>
<div class="a" style="left:378px;top:476px;width:130px;height:23px;background:#fff;border-top:1px dotted #333;border-right:1px dotted #333"></div>
<div class="a" style="left:490px;top:477px;width:16px;height:21px;border:1px solid #c9a060;background:linear-gradient(#f3dcb4,#f0c070 45%,#f3c468 55%,#fbe59a)"></div>
<div class="a" style="left:494px;top:485px"><svg width="9" height="5"><path d="M0.5 0.5h7l-3.5 4z" fill="#6b5a3a"/></svg></div>
<div class="t" style="left:383.3px;top:482px;font-size:12.7px;color:#111;">SRV-LABOR</div>
<div class="t" style="left:512px;top:482px;font-size:12.7px;color:#fff;">Professional Servic...</div>
<div class="t" style="left:770.3px;top:482px;font-size:12.7px;color:#fff;">HOUR</div>
<div class="t" style="left:899px;top:482px;font-size:12.7px;color:#fff;">HQ</div>
<div class="t" style="right:772.5px;top:482px;font-size:12.7px;color:#fff;">1</div>
<div class="t" style="right:642.5px;top:482px;font-size:12.7px;color:#fff;">80.00</div>
<div class="t" style="right:379.5px;top:482px;font-size:12.7px;color:#fff;">80.00</div>
<div class="a" style="left:378px;top:522.5px;width:1165px;height:1px;background:#e2e2e2"></div>
<div class="a" style="left:507.5px;top:499px;width:1px;height:24px;background:#e2e2e2"></div>
<div class="a" style="left:636.4px;top:499px;width:1px;height:24px;background:#e2e2e2"></div>
<div class="a" style="left:765.3px;top:499px;width:1px;height:24px;background:#e2e2e2"></div>
<div class="a" style="left:894px;top:499px;width:1px;height:24px;background:#e2e2e2"></div>
<div class="a" style="left:1023.5px;top:499px;width:1px;height:24px;background:#e2e2e2"></div>
<div class="a" style="left:1152.2px;top:499px;width:1px;height:24px;background:#e2e2e2"></div>
<div class="a" style="left:1281.5px;top:499px;width:1px;height:24px;background:#e2e2e2"></div>
<div class="a" style="left:1410.4px;top:499px;width:1px;height:24px;background:#e2e2e2"></div>
<div class="t" style="right:772.5px;top:506px;font-size:12.7px;color:#111;">1</div>
<div class="t" style="right:642.5px;top:506px;font-size:12.7px;color:#111;">150.00</div>
<div class="t" style="right:379.5px;top:506px;font-size:12.7px;color:#111;">150.00</div>
<div class="ind" style="left:362px;top:476px;width:17px;height:24px"></div>
<div class="ind" style="left:362px;top:500px;width:17px;height:24px"></div>
<div class="a" style="left:365px;top:480px"><svg width="10" height="14"><path d="M7 1l2 2-5 8-2.5 1 .5-2.5z" fill="none" stroke="#8a8fa0" stroke-width="1"/><path d="M1 13h8" stroke="#8a8fa0" stroke-dasharray="1 1"/></svg></div>
<div class="a" style="left:362px;top:818px;width:1182px;height:31px;background:linear-gradient(#f4f5f7,#dfe2e6);border-top:1px solid #7f838a;border-left:1px solid #6f7278;border-bottom:1px solid #7f838a"></div>
<div class="a" style="left:1025.5px;top:820px;width:126px;height:27px;border:1px solid #b9bcc2;background:linear-gradient(#f8f9fa,#eceef1)"></div>
<div class="a" style="left:1412px;top:820px;width:131px;height:27px;border:1px solid #b9bcc2;background:linear-gradient(#f8f9fa,#eceef1)"></div>
<div class="t" style="right:770px;top:828px;font-size:12.7px;color:#111;">2</div>
<div class="t" style="right:379.5px;top:828px;font-size:12.7px;color:#111;">230.00</div>
<div class="a" style="left:362px;top:849px;width:1182px;height:22px;background:linear-gradient(#f3f3f3,#e9e9e9)"></div>
<div class="a" style="left:362px;top:849px;width:60px;height:22px;background:linear-gradient(#e3e3e3,#cbcbcb 50%,#d9d9d9)"></div>
<div class="a" style="left:365px;top:854px"><svg width="12" height="10"><g fill="#9aa0a8"><rect x="0" y="1" width="1.2" height="8"/><path d="M6 1v8L2 5z"/><path d="M10 1v8L6 5z"/></g></svg></div>
<div class="a" style="left:1532px;top:853px"><svg width="7" height="11"><path d="M1 1v9l5-4.5z" fill="#8ea2c8"/></svg></div>
<div class="t" style="left:1381px;top:886px;font-size:13.5px;color:#111;">Total</div>
<div class="a" style="left:1418px;top:877px;width:125px;height:24px;border:1px solid #b4b8be;background:#edeff2"></div>
<div class="t" style="right:380.5px;top:884px;font-size:12.7px;color:#111;">230.00</div>
<div class="btn" style="left:1135px;top:928px;width:98px;height:28px;background:linear-gradient(#f7f8fa,#e6eaef 40%,#d3d9e1 60%,#e4e8ed)"></div>
<div class="t" style="left:1184.0px;top:936px;font-size:12.9px;color:#111;transform:translateX(-50%);">Save</div>
<div class="btn" style="left:1236px;top:928px;width:110px;height:28px;background:linear-gradient(#f7f8fa,#e6eaef 40%,#d3d9e1 60%,#e4e8ed)"></div>
<div class="t" style="left:1291.0px;top:936px;font-size:12.9px;color:#111;transform:translateX(-50%);">Save &amp; Preview</div>
<div class="btn" style="left:1354px;top:928px;width:94px;height:28px;background:linear-gradient(#f7f8fa,#e6eaef 40%,#d3d9e1 60%,#e4e8ed)"></div>
<div class="t" style="left:1401.0px;top:936px;font-size:12.9px;color:#111;transform:translateX(-50%);">Save &amp; Print</div>
<div class="btn" style="left:1455px;top:928px;width:94px;height:28px;background:linear-gradient(#f7f8fa,#e6eaef 40%,#d3d9e1 60%,#e4e8ed)"></div>
<div class="t" style="left:1502.0px;top:936px;font-size:12.9px;color:#111;transform:translateX(-50%);">Cancel</div>
<div class="a" style="left:382px;top:499px;width:590px;height:514px;background:#eff0f2"></div>
<div class="a" style="left:382px;top:498px;width:590px;height:1px;background:#a3a6ab"></div>
<div class="a" style="left:395px;top:515px;width:351px;height:23px;border:1px solid #a9aeb6;background:#fff"></div>
<div class="btn" style="left:752px;top:514px;width:93px;height:25px;background:linear-gradient(#f7f8fa,#e6eaef 40%,#d3d9e1 60%,#e4e8ed)"></div>
<div class="t" style="left:798.5px;top:521px;font-size:12.9px;color:#111;transform:translateX(-50%);">Find</div>
<div class="a" style="left:382px;top:553.5px;width:590px;height:1px;background:#d3d6db"></div>
<div class="a" style="left:383px;top:556px;width:588px;height:376px;background:#fff"></div>
<div class="hd" style="left:382px;top:556px;width:589px;height:24px;border-right:1px solid #6f7278"></div>
<div class="a" style="left:397px;top:557px;width:1px;height:22px;background:#6f7278"></div>
<div class="a" style="left:523px;top:557px;width:1px;height:22px;background:#6f7278"></div>
<div class="a" style="left:892px;top:557px;width:1px;height:22px;background:#6f7278"></div>
<div class="t" style="left:402.5px;top:561px;font-size:12.7px;color:#111;">Item Code</div>
<div class="t" style="left:528px;top:561px;font-size:12.7px;color:#111;">Description</div>
<div class="t" style="left:897.5px;top:561px;font-size:12.7px;color:#111;">Bal. Qty</div>
<div class="a" style="left:398px;top:603px;width:573px;height:1px;background:#e3e3e3"></div>
<div class="a" style="left:523px;top:580px;width:1px;height:24px;background:#e3e3e3"></div>
<div class="a" style="left:892px;top:580px;width:1px;height:24px;background:#e3e3e3"></div>
<div class="ind" style="left:382px;top:580px;width:16px;height:24px;border-left:none"></div>
<div class="t" style="left:402px;top:586px;font-size:12.7px;color:#111;">BELT-V</div>
<div class="t" style="left:528px;top:586px;font-size:12.7px;color:#111;">Heavy Duty Drive Belt (V-Type)</div>
<div class="t" style="right:952.5px;top:586px;font-size:12.7px;color:#111;">29</div>
<div class="a" style="left:398px;top:627px;width:573px;height:1px;background:#e3e3e3"></div>
<div class="a" style="left:523px;top:604px;width:1px;height:24px;background:#e3e3e3"></div>
<div class="a" style="left:892px;top:604px;width:1px;height:24px;background:#e3e3e3"></div>
<div class="ind" style="left:382px;top:604px;width:16px;height:24px;border-left:none"></div>
<div class="t" style="left:402px;top:610px;font-size:12.7px;color:#111;">CAL-CERT</div>
<div class="t" style="left:528px;top:610px;font-size:12.7px;color:#111;">Calibration Certification Fee</div>
<div class="t" style="right:952.5px;top:610px;font-size:12.7px;color:#111;">-1</div>
<div class="a" style="left:398px;top:651px;width:573px;height:1px;background:#e3e3e3"></div>
<div class="a" style="left:523px;top:628px;width:1px;height:24px;background:#e3e3e3"></div>
<div class="a" style="left:892px;top:628px;width:1px;height:24px;background:#e3e3e3"></div>
<div class="ind" style="left:382px;top:628px;width:16px;height:24px;border-left:none"></div>
<div class="t" style="left:402px;top:634px;font-size:12.7px;color:#111;">CR-READER</div>
<div class="t" style="left:528px;top:634px;font-size:12.7px;color:#111;">Proximity Card Reader Module</div>
<div class="t" style="right:952.5px;top:634px;font-size:12.7px;color:#111;">99</div>
<div class="a" style="left:398px;top:652px;width:573px;height:23px;background:#316ac5"></div>
<div class="a" style="left:398px;top:675px;width:573px;height:1px;background:#e3e3e3"></div>
<div class="a" style="left:523px;top:652px;width:1px;height:24px;background:#e3e3e3"></div>
<div class="a" style="left:892px;top:652px;width:1px;height:24px;background:#e3e3e3"></div>
<div class="ind" style="left:382px;top:652px;width:16px;height:24px;border-left:none"></div>
<div class="t" style="left:402px;top:658px;font-size:12.7px;color:#fff;">DB-INDEX</div>
<div class="t" style="left:528px;top:658px;font-size:12.7px;color:#fff;">Database Optimization Tool</div>
<div class="t" style="right:952.5px;top:658px;font-size:12.7px;color:#fff;">-2</div>
<div class="a" style="left:398px;top:699px;width:573px;height:1px;background:#e3e3e3"></div>
<div class="a" style="left:523px;top:676px;width:1px;height:24px;background:#e3e3e3"></div>
<div class="a" style="left:892px;top:676px;width:1px;height:24px;background:#e3e3e3"></div>
<div class="ind" style="left:382px;top:676px;width:16px;height:24px;border-left:none"></div>
<div class="t" style="left:402px;top:682px;font-size:12.7px;color:#111;">GAS-R22</div>
<div class="t" style="left:528px;top:682px;font-size:12.7px;color:#111;">Refrigerant Gas Refill (Per KG)</div>
<div class="t" style="right:952.5px;top:682px;font-size:12.7px;color:#111;">49</div>
<div class="a" style="left:398px;top:723px;width:573px;height:1px;background:#e3e3e3"></div>
<div class="a" style="left:523px;top:700px;width:1px;height:24px;background:#e3e3e3"></div>
<div class="a" style="left:892px;top:700px;width:1px;height:24px;background:#e3e3e3"></div>
<div class="ind" style="left:382px;top:700px;width:16px;height:24px;border-left:none"></div>
<div class="t" style="left:402px;top:706px;font-size:12.7px;color:#111;">POS-DVR</div>
<div class="t" style="left:528px;top:706px;font-size:12.7px;color:#111;">POS Device Driver License</div>
<div class="t" style="right:952.5px;top:706px;font-size:12.7px;color:#111;">-1</div>
<div class="a" style="left:398px;top:747px;width:573px;height:1px;background:#e3e3e3"></div>
<div class="a" style="left:523px;top:724px;width:1px;height:24px;background:#e3e3e3"></div>
<div class="a" style="left:892px;top:724px;width:1px;height:24px;background:#e3e3e3"></div>
<div class="ind" style="left:382px;top:724px;width:16px;height:24px;border-left:none"></div>
<div class="t" style="left:402px;top:730px;font-size:12.7px;color:#111;">PROJ-BULB</div>
<div class="t" style="left:528px;top:730px;font-size:12.7px;color:#111;">High-Lumens Projector Bulb</div>
<div class="t" style="right:952.5px;top:730px;font-size:12.7px;color:#111;">39</div>
<div class="a" style="left:398px;top:771px;width:573px;height:1px;background:#e3e3e3"></div>
<div class="a" style="left:523px;top:748px;width:1px;height:24px;background:#e3e3e3"></div>
<div class="a" style="left:892px;top:748px;width:1px;height:24px;background:#e3e3e3"></div>
<div class="ind" style="left:382px;top:748px;width:16px;height:24px;border-left:none"></div>
<div class="t" style="left:402px;top:754px;font-size:12.7px;color:#111;">PWR-FUSE</div>
<div class="t" style="left:528px;top:754px;font-size:12.7px;color:#111;">Industrial Power Surge Fuse</div>
<div class="t" style="right:952.5px;top:754px;font-size:12.7px;color:#111;">49</div>
<div class="a" style="left:398px;top:795px;width:573px;height:1px;background:#e3e3e3"></div>
<div class="a" style="left:523px;top:772px;width:1px;height:24px;background:#e3e3e3"></div>
<div class="a" style="left:892px;top:772px;width:1px;height:24px;background:#e3e3e3"></div>
<div class="ind" style="left:382px;top:772px;width:16px;height:24px;border-left:none"></div>
<div class="t" style="left:402px;top:778px;font-size:12.7px;color:#111;">SEN-INF</div>
<div class="t" style="left:528px;top:778px;font-size:12.7px;color:#111;">Infrared Safety Sensor</div>
<div class="t" style="right:952.5px;top:778px;font-size:12.7px;color:#111;">79</div>
<div class="a" style="left:398px;top:819px;width:573px;height:1px;background:#e3e3e3"></div>
<div class="a" style="left:523px;top:796px;width:1px;height:24px;background:#e3e3e3"></div>
<div class="a" style="left:892px;top:796px;width:1px;height:24px;background:#e3e3e3"></div>
<div class="ind" style="left:382px;top:796px;width:16px;height:24px;border-left:none"></div>
<div class="t" style="left:402px;top:802px;font-size:12.7px;color:#111;">SRV-LABOR</div>
<div class="t" style="left:528px;top:802px;font-size:12.7px;color:#111;">Professional Service/Labor Charge</div>
<div class="t" style="right:952.5px;top:802px;font-size:12.7px;color:#111;">-10</div>
<div class="a" style="left:385.5px;top:656px"><svg width="9" height="12"><path d="M1.5 1.5L6 6L1.5 10.5" fill="none" stroke="#5a5a80" stroke-width="2"/></svg></div>
<div class="a" style="left:382px;top:931.5px;width:590px;height:1.5px;background:#cdd0d5"></div>
<div class="btn" style="left:770px;top:949px;width:93px;height:27px;background:linear-gradient(#f7f8fa,#e6eaef 40%,#d3d9e1 60%,#e4e8ed)"></div>
<div class="t" style="left:816.5px;top:957px;font-size:12.9px;color:#111;transform:translateX(-50%);">Add New</div>
<div class="btn" style="left:867px;top:949px;width:91px;height:27px;background:linear-gradient(#f7f8fa,#e6eaef 40%,#d3d9e1 60%,#e4e8ed)"></div>
<div class="t" style="left:912.5px;top:957px;font-size:12.9px;color:#111;transform:translateX(-50%);">Clear</div>
<div class="a" style="left:382px;top:991px;width:590px;height:1.5px;background:#c9ccd1"></div>
<div class="a" style="left:390px;top:999px"><svg width="9" height="9"><path d="M1 1l7 7M8 1l-7 7" stroke="#555" stroke-width="1.3"/></svg></div>
<div class="a" style="left:955px;top:1000px"><svg width="12" height="12"><g fill="#8a8a8a"><rect x="9" y="1" width="2" height="2"/><rect x="6" y="4" width="2" height="2"/><rect x="9" y="4" width="2" height="2"/><rect x="3" y="7" width="2" height="2"/><rect x="6" y="7" width="2" height="2"/><rect x="9" y="7" width="2" height="2"/></g></svg></div>
<div class="red" style="left:402px;top:421px;width:106px;height:32px"></div>
<div class="red" style="left:355px;top:142px;width:42px;height:40px;border-width:6px"></div>
<div class="red" style="left:376px;top:470px;width:602px;height:550px;border-width:6px"></div>
<div class="red" style="left:1137px;top:925.5px;width:97px;height:36px;border-width:5.5px"></div>
<div class="circ" style="left:511.7px;top:412.7px;width:45.2px;height:48.2px"></div>
<div class="t" style="left:534.3px;top:427px;font-size:20px;color:#000;font-weight:bold;transform:translateX(-50%);-webkit-text-stroke:0.3px #000;">1</div>
<div class="circ" style="left:401.9px;top:141.8px;width:45.2px;height:48.2px"></div>
<div class="t" style="left:424.5px;top:156px;font-size:20px;color:#000;font-weight:bold;transform:translateX(-50%);-webkit-text-stroke:0.3px #000;">2</div>
<div class="circ" style="left:985.8px;top:470.1px;width:45.2px;height:48.2px"></div>
<div class="t" style="left:1008.4px;top:484px;font-size:20px;color:#000;font-weight:bold;transform:translateX(-50%);-webkit-text-stroke:0.3px #000;">3</div>
<div class="circ" style="left:1239.9px;top:919.2px;width:45.2px;height:48.2px"></div>
<div class="t" style="left:1262.5px;top:933px;font-size:20px;color:#000;font-weight:bold;transform:translateX(-50%);-webkit-text-stroke:0.3px #000;">4</div>
</body></html>
